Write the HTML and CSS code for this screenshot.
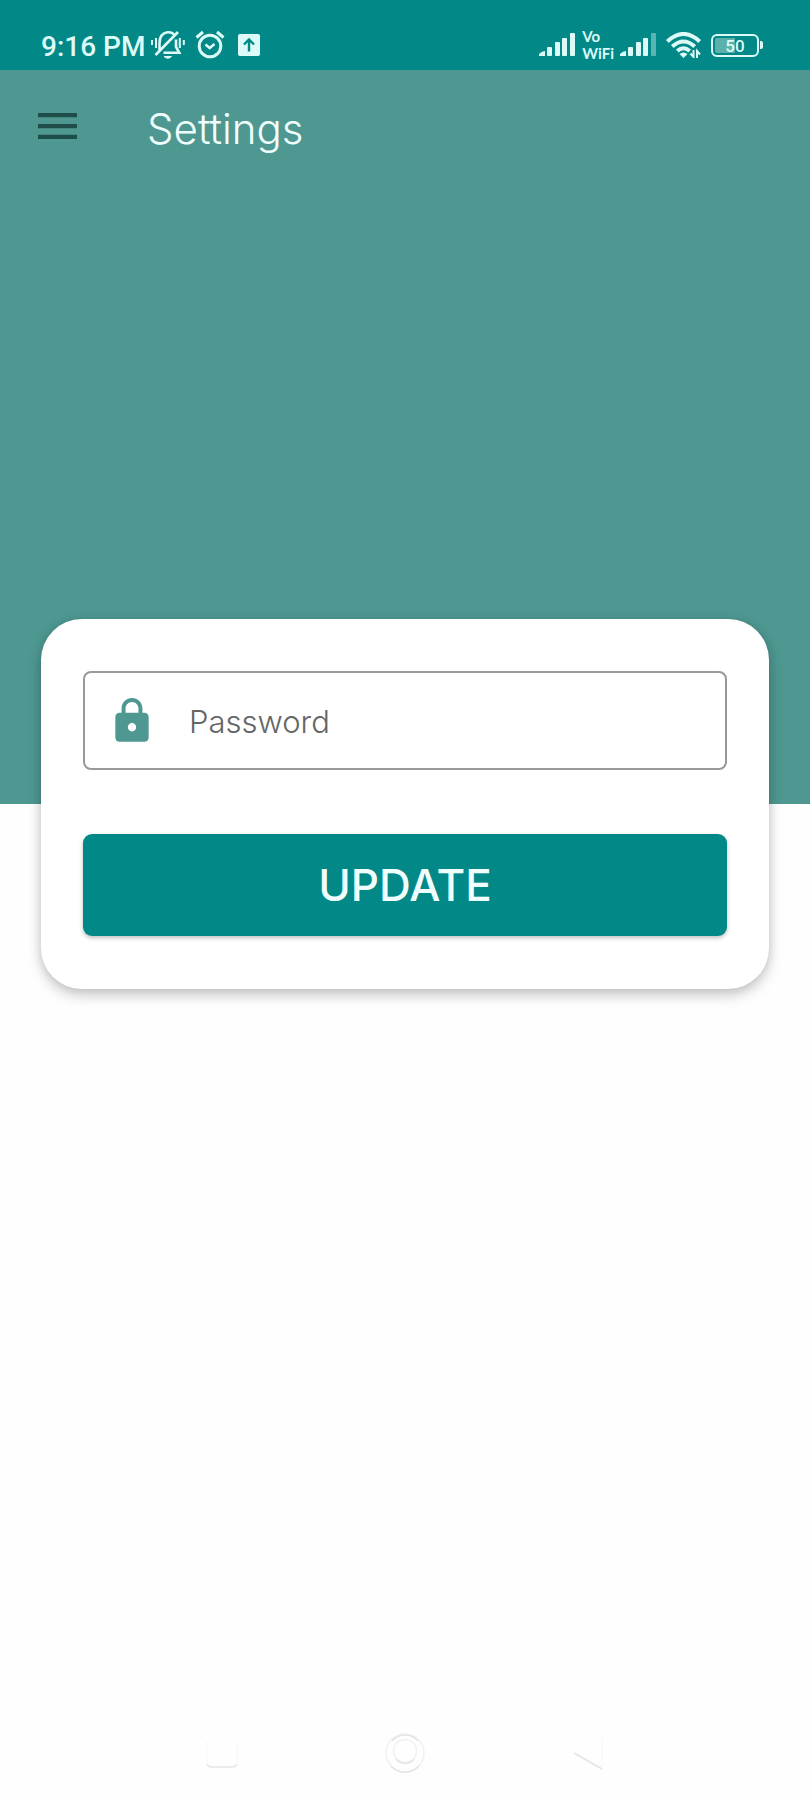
FILE: index.html
```html
<!DOCTYPE html>
<html lang="en">
<head>
<meta charset="utf-8">
<meta name="viewport" content="width=device-width, initial-scale=1">
<title>Settings</title>
<link rel="stylesheet" href="styles.css">
</head>
<body>
<div class="status-bar">
  <div class="status-left">
    <span class="clock">9:16 PM</span>
    <svg class="icon-bell" width="34" height="30" viewBox="0 0 34 30" fill="none" stroke="currentColor" stroke-width="2.6">
      <path d="M8.500 20V13.500C8.500 7 11.500 3 16.500 2.300C20 2 22 3.200 23.500 5M25 9.500V17L28.300 22.800H12.500M4.500 25L27 2"/>
      <path d="M13 26.500H20.500Q17 30 13 26.500Z" fill="currentColor" stroke-width="1"/>
      <path d="M1 10V15M5 8V18M28.800 8V18M32.800 10V15" stroke-width="2"/>
    </svg>
    <svg class="icon-alarm" width="30" height="30" viewBox="0 0 30 30" fill="none" stroke="currentColor" stroke-width="3">
      <circle cx="15" cy="16" r="10.800"/>
      <path d="M1.500 7.500L8 2M28.500 7.500L22 2"/>
      <path d="M10.500 14.500L14.700 18L19.500 14" stroke-width="2.600"/>
    </svg>
    <svg class="icon-upload" width="22" height="22" viewBox="0 0 22 22">
      <rect width="22" height="22" rx="2" fill="currentColor"/>
      <path d="M11 17.500V6M6 10.500L11 5.500L16 10.500" fill="none" stroke="#028886" stroke-width="2.400"/>
    </svg>
  </div>
  <div class="status-right">
    <svg width="37" height="24" viewBox="0 0 37 24" fill="currentColor">
      <path d="M0 23V21Q3 18 6 18V23Z"/>
      <rect x="8" y="14" width="5" height="9" rx="1"/>
      <rect x="16" y="9" width="5" height="14" rx="1"/>
      <rect x="23" y="5" width="5" height="18" rx="1"/>
      <rect x="31" y="0" width="5" height="23" rx="1"/>
    </svg>
    <span class="vowifi"><span>Vo</span><span>WiFi</span></span>
    <svg width="37" height="24" viewBox="0 0 37 24" fill="currentColor">
      <path d="M0 23V21Q3 18 6 18V23Z"/>
      <rect x="8" y="14" width="5" height="9" rx="1"/>
      <rect x="16" y="9" width="5" height="14" rx="1"/>
      <rect x="23" y="5" width="5" height="18" rx="1"/>
      <rect x="31" y="0" width="5" height="23" rx="1" opacity=".4"/>
    </svg>
    <svg class="icon-wifi" width="36" height="26" viewBox="0 0 36 26" fill="none" stroke="currentColor" stroke-width="4">
      <path d="M1.300 9.500Q17.500 -5.500 33.700 9.500"/>
      <path d="M6.300 14.500Q17.500 4.500 28.700 14.500"/>
      <path d="M11.300 19Q17.500 13.500 23.700 19"/>
      <path d="M13.500 22Q17.500 19 21.500 22L17.500 26Z" fill="currentColor" stroke="none"/>
      <path d="M27.500 18V25L24.500 21.500M31 26V19L34 22.500" stroke-width="2"/>
    </svg>
    <span class="battery"><span class="battery-body">50</span><span class="battery-tip"></span></span>
  </div>
</div>

<header class="hero">
  <div class="app-bar">
    <button class="menu-button" type="button" aria-label="Menu">
      <svg width="39" height="27" viewBox="0 0 39 27" fill="currentColor">
        <path d="M0 0H39V4.300H0ZM0 11H39V15.300H0ZM0 21.700H39V26H0Z"/>
      </svg>
    </button>
    <h1 class="title">Settings</h1>
  </div>
</header>

<main class="content">
  <form class="card">
    <label class="field">
      <svg width="50" height="50" viewBox="0 0 24 24" fill="currentColor" aria-hidden="true">
        <path d="M18 8h-1V6c0-2.760-2.240-5-5-5S7 3.240 7 6v2H6c-1.100 0-2 .9-2 2v10c0 1.100.9 2 2 2h12c1.100 0 2-.9 2-2V10c0-1.100-.9-2-2-2zm-6 9c-1.100 0-2-.9-2-2s.9-2 2-2 2 .9 2 2-.9 2-2 2zm3.100-9H8.900V6c0-1.710 1.390-3.100 3.100-3.100 1.710 0 3.100 1.390 3.100 3.100v2z"/>
      </svg>
      <input class="field-input" type="password" placeholder="Password" aria-label="Password">
    </label>
    <button class="update-button" type="button">UPDATE</button>
  </form>
</main>

<nav class="nav-bar">
  <button class="nav-button" type="button" aria-label="Recent apps">
    <svg width="40" height="40" viewBox="0 0 40 40" fill="none" stroke="#e6e6e6">
      <path d="M5 8V30M35 8V30" stroke="#f7f7f7"/>
      <path d="M5 31Q6 34 10 34H30Q34 34 35 31" stroke-width="1.500"/>
    </svg>
  </button>
  <button class="nav-button" type="button" aria-label="Home">
    <svg width="40" height="40" viewBox="0 0 40 40" fill="none" stroke="#f1f1f1" stroke-width="1.500">
      <circle cx="20" cy="20" r="19"/>
      <circle cx="20" cy="18" r="11.500"/>
      <path d="M6 33A19 19 0 0 0 34 33M11 26A11.500 11.500 0 0 0 29 26M7 8A17 17 0 0 1 33 8" stroke="#e4e4e4"/>
    </svg>
  </button>
  <button class="nav-button" type="button" aria-label="Back">
    <svg width="40" height="40" viewBox="0 0 40 40" fill="none">
      <path d="M34 5V37" stroke="#f5f5f5"/>
      <path d="M6 20L34 36" stroke="#e4e4e4" stroke-width="1.500"/>
    </svg>
  </button>
</nav>
</body>
</html>
```
FILE: styles.css
```css
* {
  box-sizing: border-box;
}

body {
  margin: 0;
  min-height: 100vh;
  display: flex;
  flex-direction: column;
  background: #fefefe;
  font-family: Inter, "Open Sans", sans-serif;
}

svg {
  display: block;
  flex: none;
}

button {
  border: 0;
  padding: 0;
  background: none;
  font: inherit;
  cursor: pointer;
}

.status-bar {
  display: flex;
  justify-content: space-between;
  align-items: center;
  height: 70px;
  padding: 20px 47px 0 41px;
  background: #028886;
  color: #dcfbf8;
}

.status-left,
.status-right {
  display: flex;
  align-items: center;
}

.clock {
  font: 500 28px/32px Roboto, sans-serif;
  padding-top: 4px;
}

.icon-bell {
  margin-left: 6px;
}

.icon-alarm {
  margin-left: 10px;
}

.icon-upload {
  margin-left: 13px;
}

.status-right {
  gap: 6px;
}

.vowifi {
  display: flex;
  flex-direction: column;
  font: 700 15px/17px Lato, sans-serif;
}

.icon-wifi {
  margin-left: 3px;
}

.battery {
  display: flex;
  align-items: center;
  gap: 1px;
  margin-left: 3px;
}

.battery-body {
  width: 48px;
  height: 23px;
  border: 2px solid currentColor;
  border-radius: 6px;
  background: linear-gradient(to right, #5bb0ac 50%, transparent 50%) content-box;
  padding: 2px;
  font: 500 17px/16px Roboto, sans-serif;
  text-align: center;
}

.battery-tip {
  width: 3px;
  height: 8px;
  border-radius: 0 2px 2px 0;
  background: currentColor;
}

.hero {
  min-height: 734px;
  background: #4e9891;
}

.app-bar {
  display: flex;
  align-items: center;
  height: 112px;
  padding: 0 38px;
  gap: 70px;
}

.menu-button {
  color: #1f4d49;
}

.title {
  margin: 0;
  padding-top: 6px;
  color: #f0fffd;
  font-size: 42px;
  font-weight: 300;
  line-height: 48px;
}

.content {
  margin-top: -185px;
  padding: 0 41px;
}

.card {
  display: flex;
  flex-direction: column;
  gap: 64px;
  padding: 52px 42px 53px;
  border-radius: 41px;
  background: #fff;
  box-shadow: 0 6px 14px rgba(0, 0, 0, .22), 0 0 8px rgba(0, 0, 0, .08);
}

.field {
  display: flex;
  align-items: center;
  gap: 32px;
  height: 99px;
  padding: 0 22px;
  border: 2px solid #999;
  border-radius: 8px;
  color: #4e9891;
}

.field-input {
  flex: 1;
  min-width: 0;
  border: 0;
  padding: 2px 0 0;
  outline: 0;
  background: none;
  color: #333;
  font: 300 31px/40px Inter, "Open Sans", sans-serif;
}

.field-input::placeholder {
  color: #666;
  opacity: 1;
}

.update-button {
  height: 102px;
  border-radius: 9px;
  background: #028886;
  box-shadow: 0 2px 4px rgba(0, 0, 0, .25);
  color: #f0fffd;
  font-size: 44px;
  font-weight: 500;
}

.nav-bar {
  display: flex;
  justify-content: center;
  gap: 143px;
  margin-top: auto;
  padding-bottom: 27px;
}
```
